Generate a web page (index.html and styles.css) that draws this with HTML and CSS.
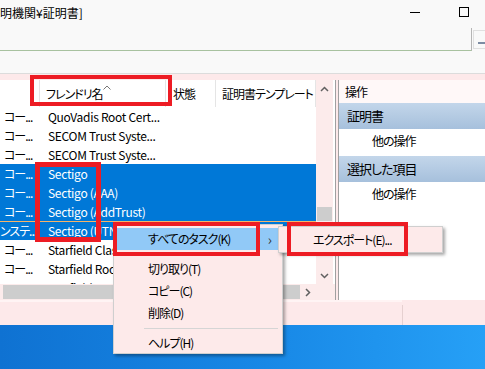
FILE: index.html
```html
<!DOCTYPE html>
<html lang="ja">
<head>
    <meta charset="UTF-8">
    <title>証明書</title>
    <link rel="stylesheet" href="styles.css">
</head>
<body>
    <div class="titlebar">
        <span class="title">明機関¥証明書]</span>
        <div class="controls">
            <div class="ctl"><div class="min-line"></div></div>
            <div class="ctl"><div class="max-box"></div></div>
        </div>
    </div>
    <div class="addressbar">
        <div class="address"></div>
        <div class="side-btn"><span></span></div>
    </div>
    <div class="spacer"></div>

    <div class="main">
        <div class="panes">
            <!-- 証明書の一覧 -->
            <div class="list">
                <div class="list-top">
                    <div class="table">
                        <div class="header jp">
                            <div class="c1"></div>
                            <div class="c2">フレンドリ名<svg class="sort" width="8" height="5" viewBox="0 0 8 5"><path d="M0.5 4.5 L4 1 L7.5 4.5" fill="none" stroke="#777" stroke-width="1"/></svg></div>
                            <div class="c3">状態</div>
                            <div class="c4">証明書テンプレート</div>
                        </div>
                        <div class="row"><div class="c1">コー...</div><div class="c2">QuoVadis Root Cert...</div></div>
                        <div class="row"><div class="c1">コー...</div><div class="c2">SECOM Trust Syste...</div></div>
                        <div class="row"><div class="c1">コー...</div><div class="c2">SECOM Trust Syste...</div></div>
                        <div class="row selected"><div class="c1">コー...</div><div class="c2">Sectigo</div></div>
                        <div class="row selected"><div class="c1">コー...</div><div class="c2">Sectigo (AAA)</div></div>
                        <div class="row selected"><div class="c1">コー...</div><div class="c2">Sectigo (AddTrust)</div></div>
                        <div class="row selected focused"><div class="c1 cut">ンステ...</div><div class="c2">Sectigo (UTN...</div></div>
                        <div class="row"><div class="c1">コー...</div><div class="c2">Starfield Class...</div></div>
                        <div class="row"><div class="c1">コー...</div><div class="c2">Starfield Root...</div></div>
                        <div class="row"><div class="c1">コー...</div><div class="c2">Starfield Servi...</div></div>
                    </div>
                    <div class="vscroll">
                        <div class="arrow"><svg width="9" height="6" viewBox="0 0 9 6"><path d="M1 5 L4.5 1.5 L8 5" fill="none" stroke="#606060" stroke-width="1.5"/></svg></div>
                        <div class="track"><div class="thumb"></div></div>
                        <div class="arrow"><svg width="9" height="6" viewBox="0 0 9 6"><path d="M1 1 L4.5 4.5 L8 1" fill="none" stroke="#606060" stroke-width="1.5"/></svg></div>
                    </div>
                </div>
                <div class="list-bottom">
                    <div class="hscroll">
                        <div class="hthumb"></div>
                        <div class="harrow"><svg width="6" height="9" viewBox="0 0 6 9"><path d="M1 1 L4.5 4.5 L1 8" fill="none" stroke="#606060" stroke-width="1.5"/></svg></div>
                    </div>
                    <div class="corner"></div>
                </div>
            </div>

            <!-- 操作パネル -->
            <div class="actions jp">
                <div class="actions-head">操作</div>
                <div class="group-head">証明書</div>
                <div class="group-item">他の操作</div>
                <div class="group-head second">選択した項目</div>
                <div class="group-item">他の操作</div>
            </div>
        </div>
        <div class="statusbar">
            <div class="status-left"></div>
            <div class="status-right"></div>
        </div>
    </div>
    <div class="desktop"></div>

    <!-- コンテキストメニュー -->
    <div class="menu jp">
        <div class="item active"><span>すべてのタスク(K)</span><span class="chev">›</span></div>
        <div class="item first">切り取り(T)</div>
        <div class="item">コピー(C)</div>
        <div class="item">削除(D)</div>
        <div class="sep"></div>
        <div class="item">ヘルプ(H)</div>
    </div>
    <div class="submenu jp">
        <div class="item">エクスポート(E)...</div>
    </div>

    <!-- 注釈の赤枠 -->
    <div class="mark mark-header"></div>
    <div class="mark mark-names"></div>
    <div class="mark mark-tasks"></div>
    <div class="mark mark-export"></div>
</body>
</html>
```

FILE: styles.css
```css
body {
    margin: 0;
    width: 485px;
    height: 369px;
    overflow: hidden;
    position: relative;
    background: #f9f9f9;
    font-family: "Noto Sans CJK JP", sans-serif;
    font-size: 12px;
    font-feature-settings: "palt";
    letter-spacing: -0.3px;
    color: #000;
}
.jp { letter-spacing: -1px; }

/* タイトルバー */
.titlebar { height: 28px; display: flex; }
.title { font-size: 12px; line-height: 26px; letter-spacing: 0; }
.controls { margin-left: auto; display: flex; padding-right: 4px; }
.ctl { width: 44px; height: 24px; display: flex; align-items: center; justify-content: center; }
.min-line { width: 10px; height: 1px; background: #000; margin-top: 1px; }
.max-box { width: 8px; height: 8px; border: 1px solid #000; margin: 0 0 0 10px; margin-top: -1px; }

.addressbar { height: 23px; display: flex; }
.address { flex: 1; border-right: 1px solid #b5b5b5; border-bottom: 1px solid #a8c2a0; }
.side-btn { width: 11px; margin: 2px 0 2px 1px; border: 1px solid #e0e0e0; border-right: none; }
.side-btn span { display: block; width: 7px; height: 2px; background: #7d8ca3; margin: 11px 0 0 4px; }

.spacer { height: 22px; border-bottom: 1px solid #dcdcdc; }

/* メイン領域 */
.main { background: #fde9ea; padding-top: 6px; }
.panes { display: flex; height: 220px; }

.list { width: 335px; border-right: 1px solid #a0a0a0; display: flex; flex-direction: column; background: #fff; }
.list-top { display: flex; height: 204px; }
.table { width: 316px; overflow: hidden; }
.header { display: flex; height: 27px; line-height: 27px; }
.header > div { border-right: 1px solid #e5e5e5; box-sizing: border-box; white-space: nowrap; }
.header .c1 { width: 40px; }
.header .c2 { width: 126px; padding-left: 6px; }
.header .c3 { width: 50px; padding-left: 7px; }
.header .c4 { width: 100px; padding-left: 6px; }
.sort { vertical-align: 9px; margin-left: 0; }

.row { display: flex; height: 19px; line-height: 19px; white-space: nowrap; }
.row .c1 { width: 40px; padding-left: 4px; box-sizing: border-box; overflow: hidden; letter-spacing: -1px; }
.row .c1.cut { padding-left: 0; }
.row .c2 { width: 126px; padding-left: 8px; box-sizing: border-box; overflow: hidden; }
.row.selected { background: #0078d7; color: #fff; }
.row.focused { box-shadow: inset 0 1px 0 0 #f5b46a; }

.vscroll { width: 17px; background: #fcebeb; display: flex; flex-direction: column; }
.vscroll .arrow { height: 17px; display: flex; align-items: center; justify-content: center; }
.vscroll .track { flex: 1; }
.thumb { height: 14px; margin: 110px 1px 0 1px; background: #cdcdcd; }

.list-bottom { display: flex; height: 16px; }
.hscroll { width: 316px; display: flex; background: #fcebeb; }
.hthumb { width: 297px; margin: 1px 0 1px 3px; background: #cdcdcd; }
.harrow { flex: 1; display: flex; align-items: center; justify-content: center; }
.corner { flex: 1; background: #fcebeb; }

.actions { flex: 1; margin-left: 2px; border-left: 1px solid #a0a0a0; background: #fff; }
.actions-head { height: 23px; line-height: 23px; padding-left: 6px; background: #fff8f8; }
.group-head { height: 26px; line-height: 26px; padding-left: 8px; font-size: 13px; background: linear-gradient(#c3d6ea, #a6c0dc); }
.group-head.second { margin-top: 3px; }
.group-item { height: 24px; line-height: 24px; padding-left: 33px; }

.statusbar { display: flex; height: 25px; }
.status-left { width: 402px; border-top: 2px solid #fff4f4; }
.status-right { flex: 1; border-left: 1px solid #e6d0d0; margin-top: 5px; }

.desktop { height: 44px; background: linear-gradient(90deg, #0f72d2, #1888e6 55%, #26a0f6); }

/* コンテキストメニュー */
.menu {
    position: absolute;
    left: 113px;
    top: 224px;
    width: 170px;
    height: 130px;
    box-sizing: border-box;
    padding: 3px 3px 2px 2px;
    background: #fdeaea;
    border: 1px solid #cfcfcf;
    box-shadow: 2px 2px 3px rgba(0, 0, 0, 0.35);
}
.menu .item { height: 22px; line-height: 22px; padding-left: 32px; white-space: nowrap; }
.menu .item.active { background: #91c9f7; display: flex; justify-content: space-between; }
.menu .item.first { margin-top: 8px; }
.chev { padding-right: 8px; color: #333; font-size: 14px; }
.sep { height: 1px; background: #d5d5d5; margin: 4px 1px 3px 28px; }

.submenu {
    position: absolute;
    left: 278px;
    top: 226px;
    width: 165px;
    height: 27px;
    box-sizing: border-box;
    background: #fdeaea;
    border: 1px solid #cfcfcf;
    box-shadow: 2px 2px 3px rgba(0, 0, 0, 0.35);
}
.submenu .item { line-height: 25px; padding-left: 34px; }

/* 赤枠 */
.mark { position: absolute; border: 4px solid #ed1c24; box-sizing: border-box; }
.mark-header { left: 30px; top: 75px; width: 142px; height: 31px; }
.mark-names { left: 35px; top: 162px; width: 66px; height: 80px; border-width: 5px; }
.mark-tasks { left: 113px; top: 222px; width: 147px; height: 34px; }
.mark-export { left: 287px; top: 222px; width: 121px; height: 34px; }
```
